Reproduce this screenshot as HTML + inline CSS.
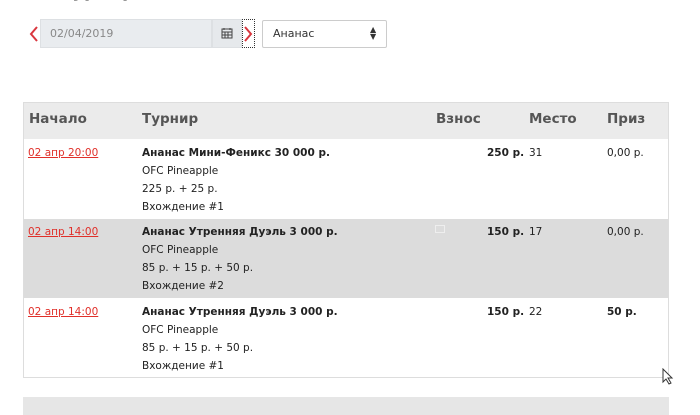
<html><head><style>
body{margin:0;width:700px;height:415px;background:#fff;font-family:"DejaVu Sans","Liberation Sans",sans-serif;position:relative;overflow:hidden;color:#222}
.a{position:absolute}
.hd{font-weight:bold;font-size:13.5px;color:#555;top:111px}
.r{font-size:10.5px;line-height:18px}
.lk{color:#e0302a;text-decoration:underline}
b{font-weight:bold}
</style></head><body>
<div class="a" style="left:60px;top:-19px;font-size:18px;font-weight:bold;color:#333">Турнир</div>
<svg class="a" style="left:29px;top:25px" width="10" height="18"><path d="M8 2 L2 9 L8 16" stroke="#d9363e" stroke-width="2" fill="none"/></svg>
<div class="a" style="left:40px;top:19px;width:172px;height:29px;background:#e9ecef;border:1px solid #dde0e3;box-sizing:border-box"></div>
<div class="a" style="left:50px;top:27px;font-size:11px;color:#888">02/04/2019</div>
<div class="a" style="left:212px;top:19px;width:30px;height:29px;background:#e6e9ec;border:1px solid #dde0e3;box-sizing:border-box"></div>
<svg class="a" style="left:221px;top:27px" width="12" height="12"><rect x="1" y="2" width="10" height="9" fill="none" stroke="#444"/><path d="M1 5H11M4 5V11M7 5V11M1 8H11M3 1V3M9 1V3" stroke="#444"/></svg>
<div class="a" style="left:242px;top:19px;width:13px;height:29px;border:1px dotted #333;box-sizing:border-box"></div>
<svg class="a" style="left:243px;top:25px" width="10" height="18"><path d="M2 2 L8 9 L2 16" stroke="#d9363e" stroke-width="2" fill="none"/></svg>
<div class="a" style="left:262px;top:20px;width:125px;height:28px;border:1px solid #ccc;border-radius:2px;box-sizing:border-box"></div>
<div class="a" style="left:273px;top:27px;font-size:11px;color:#333">Ананас</div>
<div class="a" style="left:370px;top:26px;font-size:8px;line-height:7px;color:#333">▲<br>▼</div>

<div class="a" style="left:23px;top:102px;width:646px;height:276px;border:1px solid #ddd;box-sizing:border-box"></div>
<div class="a" style="left:24px;top:103px;width:644px;height:36px;background:#ebebeb"></div>
<div class="a" style="left:24px;top:219px;width:644px;height:79px;background:#dcdcdc"></div>
<div class="a hd" style="left:29px">Начало</div>
<div class="a hd" style="left:142px">Турнир</div>
<div class="a hd" style="left:436px">Взнос</div>
<div class="a hd" style="left:529px">Место</div>
<div class="a hd" style="left:607px">Приз</div>

<div class="a r lk" style="left:28px;top:144px">02 апр 20:00</div>
<div class="a r" style="left:142px;top:144px"><b>Ананас Мини-Феникс 30 000 р.</b><br>OFC Pineapple<br>225 р. + 25 р.<br>Вхождение #1</div>
<div class="a r" style="left:487px;top:144px"><b>250 р.</b></div>
<div class="a r" style="left:529px;top:144px">31</div>
<div class="a r" style="left:607px;top:144px">0,00 р.</div>

<div class="a" style="left:435px;top:225px;width:10px;height:8px;border:1px solid #eee;box-sizing:border-box"></div>
<div class="a r lk" style="left:28px;top:223px">02 апр 14:00</div>
<div class="a r" style="left:142px;top:223px"><b>Ананас Утренняя Дуэль 3 000 р.</b><br>OFC Pineapple<br>85 р. + 15 р. + 50 р.<br>Вхождение #2</div>
<div class="a r" style="left:487px;top:223px"><b>150 р.</b></div>
<div class="a r" style="left:529px;top:223px">17</div>
<div class="a r" style="left:607px;top:223px">0,00 р.</div>

<div class="a r lk" style="left:28px;top:303px">02 апр 14:00</div>
<div class="a r" style="left:142px;top:303px"><b>Ананас Утренняя Дуэль 3 000 р.</b><br>OFC Pineapple<br>85 р. + 15 р. + 50 р.<br>Вхождение #1</div>
<div class="a r" style="left:487px;top:303px"><b>150 р.</b></div>
<div class="a r" style="left:529px;top:303px">22</div>
<div class="a r" style="left:607px;top:303px"><b>50 р.</b></div>

<div class="a" style="left:23px;top:397px;width:646px;height:18px;background:#e6e6e6"></div>
<svg class="a" style="left:662px;top:368px" width="12" height="17"><path d="M1 1V14L4 11L7 16L9 15L6 10H10Z" fill="#fff" stroke="#333"/></svg>
</body></html>
